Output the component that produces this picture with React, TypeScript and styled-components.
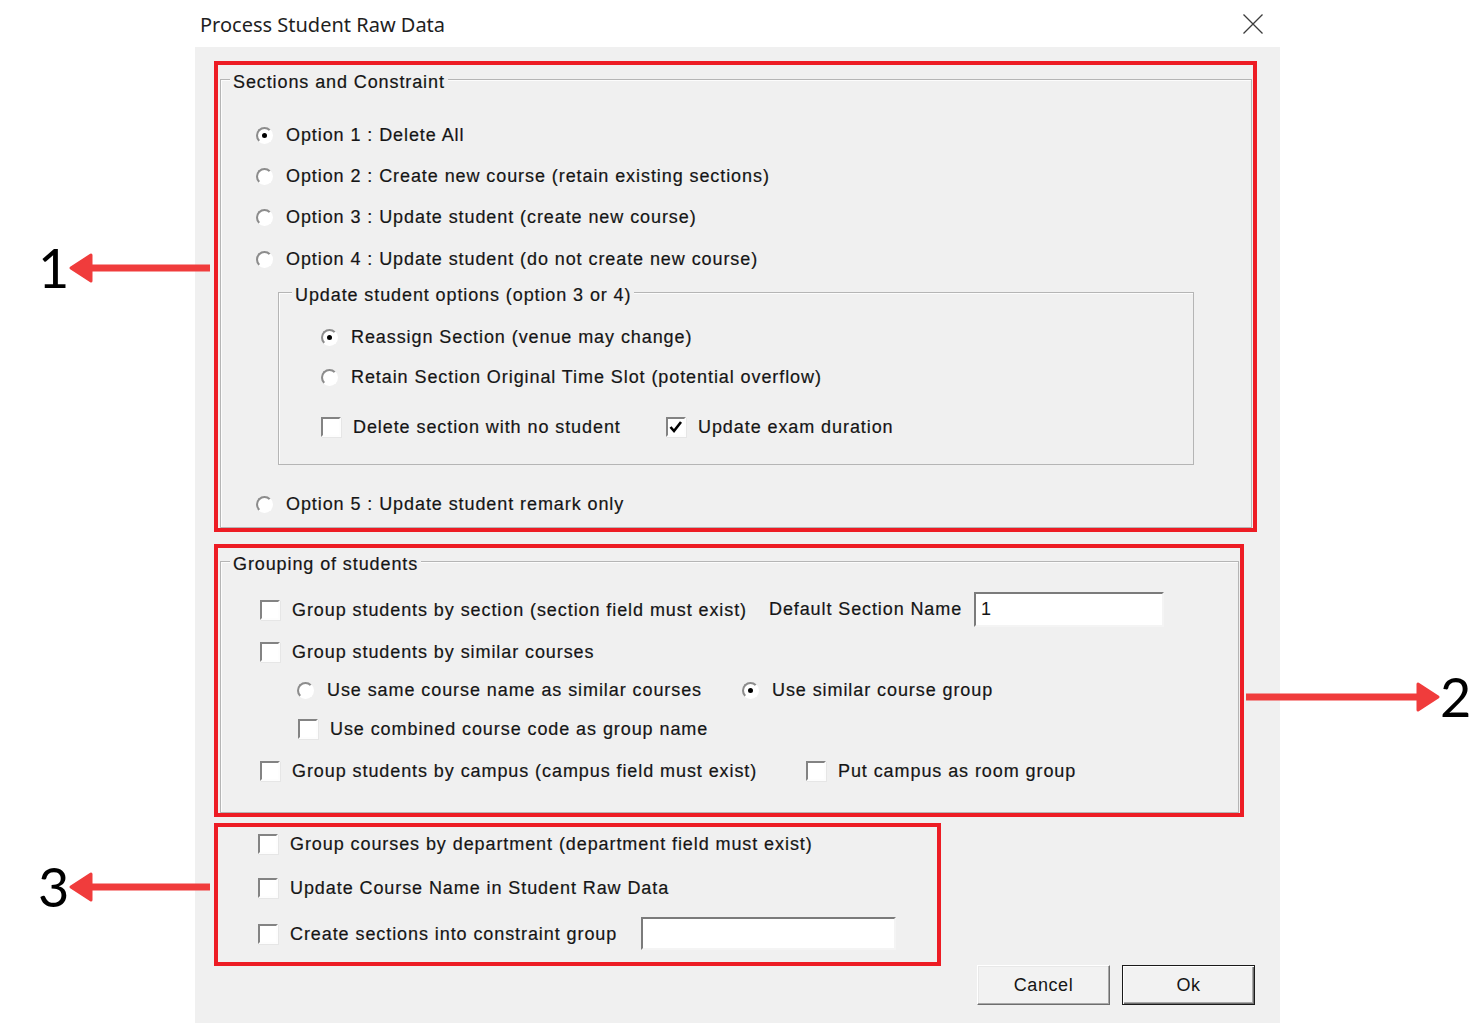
import styled, { createGlobalStyle } from 'styled-components'

const GlobalStyle = createGlobalStyle`
  html, body {
    margin: 0;
    padding: 0;
    background: #ffffff;
  }
  body {
    font-family: 'Liberation Sans', Arial, sans-serif;
    color: #151515;
  }
`

function Radio({ label, checked, width }: { label: string; checked?: boolean; width?: number }) {
  return (
    <Choice $gap={13} $width={width}>
      <RadioDot $checked={checked} />
      <LabelText>{label}</LabelText>
    </Choice>
  )
}

function Check({ label, checked, width }: { label: string; checked?: boolean; width?: number }) {
  return (
    <Choice $gap={12} $width={width}>
      <CheckBox>
        {checked && (
          <svg width="16" height="16" viewBox="0 0 16 16">
            <polyline points="2.5,8 6,12 13,3" fill="none" stroke="#000" strokeWidth="2.6" />
          </svg>
        )}
      </CheckBox>
      <LabelText>{label}</LabelText>
    </Choice>
  )
}

function Arrow({ length, dir }: { length: number; dir: 'left' | 'right' }) {
  const head = 22
  const tri =
    dir === 'left'
      ? `2,15 ${head},2 ${head},28`
      : `${length - 2},15 ${length - head},2 ${length - head},28`
  return (
    <svg width={length} height={30} viewBox={`0 0 ${length} 30`}>
      <g stroke="#f03c3c" fill="#f03c3c" strokeLinejoin="round">
        {dir === 'left' ? (
          <line x1={head - 4} y1={15} x2={length} y2={15} strokeWidth={7} />
        ) : (
          <line x1={0} y1={15} x2={length - head + 4} y2={15} strokeWidth={7} />
        )}
        <polygon points={tri} strokeWidth={3} />
      </g>
    </svg>
  )
}

export default function App() {
  return (
    <>
      <GlobalStyle />
      <Page>
        <Dialog>
          <TitleBar>
            <Title>Process Student Raw Data</Title>
            <CloseButton aria-label="Close">
              <svg width="20" height="20" viewBox="0 0 20 20">
                <path d="M0.5 0.5 19.5 19.5 M19.5 0.5 0.5 19.5" stroke="#3c3c3c" strokeWidth="1.3" />
              </svg>
            </CloseButton>
          </TitleBar>

          <Body>
            <Highlight $width={1043}>
              <GroupBox $mt={14}>
                <Caption $inset={9}>Sections and Constraint</Caption>
                <GroupBody $pl={35} $pb={11}>
                  <Row $mt={31}>
                    <Radio checked label="Option 1 : Delete All" />
                  </Row>
                  <Row $mt={17}>
                    <Radio label="Option 2 : Create new course (retain existing sections)" />
                  </Row>
                  <Row $mt={17}>
                    <Radio label="Option 3 : Update student (create new course)" />
                  </Row>
                  <Row $mt={18}>
                    <Radio label="Option 4 : Update student (do not create new course)" />
                  </Row>

                  <InnerGroup $mt={21}>
                    <Caption $inset={13}>Update student options (option 3 or 4)</Caption>
                    <GroupBody $pl={42} $pb={25}>
                      <Row $mt={20}>
                        <Radio checked label="Reassign Section (venue may change)" />
                      </Row>
                      <Row $mt={16}>
                        <Radio label="Retain Section Original Time Slot (potential overflow)" />
                      </Row>
                      <Row $mt={26}>
                        <Check width={345} label="Delete section with no student" />
                        <Check checked label="Update exam duration" />
                      </Row>
                    </GroupBody>
                  </InnerGroup>

                  <Row $mt={27}>
                    <Radio label="Option 5 : Update student remark only" />
                  </Row>
                </GroupBody>
              </GroupBox>

              <Callout $left={-180} $top={176}>
                <Numeral>1</Numeral>
                <Arrow length={141} dir="left" />
              </Callout>
            </Highlight>

            <Highlight $width={1030} $mt={12}>
              <GroupBox $mt={13}>
                <Caption $inset={9}>Grouping of students</Caption>
                <GroupBody $pl={39} $pb={29}>
                  <Row $mt={18} $height={35}>
                    <Check width={509} label="Group students by section (section field must exist)" />
                    <FieldLabel>Default Section Name</FieldLabel>
                    <TextField readOnly value="1" $width={190} $height={35} />
                  </Row>
                  <Row $mt={13}>
                    <Check label="Group students by similar courses" />
                  </Row>
                  <Row $mt={14} $indent={37}>
                    <Radio width={445} label="Use same course name as similar courses" />
                    <Radio checked label="Use similar course group" />
                  </Row>
                  <Row $mt={15} $indent={38}>
                    <Check label="Use combined course code as group name" />
                  </Row>
                  <Row $mt={18}>
                    <Check width={546} label="Group students by campus (campus field must exist)" />
                    <Check label="Put campus as room group" />
                  </Row>
                </GroupBody>
              </GroupBox>

              <Callout $left={1028} $top={122}>
                <Arrow length={194} dir="right" />
                <Numeral>2</Numeral>
              </Callout>
            </Highlight>

            <Highlight $width={727} $mt={6}>
              <GroupBody $pl={40} $pb={12} $pt={5}>
                <Row>
                  <Check label="Group courses by department (department field must exist)" />
                </Row>
                <Row $mt={20}>
                  <Check label="Update Course Name in Student Raw Data" />
                </Row>
                <Row $mt={17} $height={33}>
                  <Check width={383} label="Create sections into constraint group" />
                  <TextField readOnly value="" $width={255} $height={33} />
                </Row>
              </GroupBody>

              <Callout $left={-180} $top={33}>
                <Numeral>3</Numeral>
                <Arrow length={141} dir="left" />
              </Callout>
            </Highlight>

            <ButtonRow>
              <Button type="button">Cancel</Button>
              <Button type="button" $default>
                Ok
              </Button>
            </ButtonRow>
          </Body>
        </Dialog>
      </Page>
    </>
  )
}

const Page = styled.div`
  padding-left: 195px;
`

const Dialog = styled.div`
  width: 1085px;
  display: flex;
  flex-direction: column;
`

const TitleBar = styled.header`
  height: 47px;
  display: flex;
  align-items: center;
  justify-content: space-between;
  background: #ffffff;
`

const Title = styled.h1`
  margin: 2px 0 0 5px;
  font-family: 'Noto Sans', sans-serif;
  font-size: 20px;
  font-weight: 400;
  color: #1f1f1f;
`

const CloseButton = styled.button`
  width: 55px;
  height: 47px;
  display: flex;
  align-items: center;
  justify-content: center;
  padding: 0;
  border: none;
  background: transparent;
`

const Body = styled.div`
  height: 976px;
  box-sizing: border-box;
  padding: 14px 25px 0 19px;
  background: #f0f0f0;
  display: flex;
  flex-direction: column;
`

const Highlight = styled.section<{ $width: number; $mt?: number }>`
  position: relative;
  box-sizing: border-box;
  width: ${(p) => p.$width}px;
  margin-top: ${(p) => p.$mt ?? 0}px;
  border: 4px solid #ed1c24;
`

const GroupBox = styled.div<{ $mt: number }>`
  margin: ${(p) => p.$mt}px 1px 0 2px;
  border: 1px solid #b5b5b5;
  box-shadow: inset 1px 1px 0 #fcfcfc;
`

const InnerGroup = styled(GroupBox)`
  box-sizing: border-box;
  width: 916px;
  margin-left: 22px;
  margin-right: 0;
`

const GroupBody = styled.div<{ $pl: number; $pb: number; $pt?: number }>`
  display: flex;
  flex-direction: column;
  align-items: flex-start;
  padding: ${(p) => p.$pt ?? 0}px 0 ${(p) => p.$pb}px ${(p) => p.$pl}px;
`

const Caption = styled.div<{ $inset: number }>`
  width: fit-content;
  margin: -8px 0 0 ${(p) => p.$inset}px;
  padding: 0 3px;
  background: #f0f0f0;
  font-size: 18px;
  letter-spacing: 0.9px;
  line-height: 20px;
  white-space: nowrap;
  -webkit-text-stroke: 0.2px currentColor;
`

const Row = styled.div<{ $mt?: number; $indent?: number; $height?: number }>`
  display: flex;
  align-items: center;
  height: ${(p) => p.$height ?? 24}px;
  margin-top: ${(p) => p.$mt ?? 0}px;
  margin-left: ${(p) => p.$indent ?? 0}px;
`

const Choice = styled.label<{ $width?: number; $gap: number }>`
  display: flex;
  align-items: center;
  flex: none;
  gap: ${(p) => p.$gap}px;
  width: ${(p) => (p.$width ? `${p.$width}px` : 'auto')};
`

const LabelText = styled.span`
  font-size: 18px;
  letter-spacing: 0.92px;
  line-height: 20px;
  white-space: nowrap;
  -webkit-text-stroke: 0.2px currentColor;
`

const RadioDot = styled.span<{ $checked?: boolean }>`
  flex: none;
  width: 17px;
  height: 17px;
  box-sizing: border-box;
  display: flex;
  align-items: center;
  justify-content: center;
  border-radius: 50%;
  border: 2px solid;
  border-color: #8c8c8c #ffffff #ffffff #8c8c8c;
  background: #ffffff;

  &::after {
    content: '';
    width: 5px;
    height: 5px;
    border-radius: 50%;
    background: ${(p) => (p.$checked ? '#000000' : 'transparent')};
  }
`

const CheckBox = styled.span`
  flex: none;
  width: 20px;
  height: 20px;
  box-sizing: border-box;
  display: flex;
  align-items: center;
  justify-content: center;
  border: 2px solid;
  border-color: #838383 #fdfdfd #fdfdfd #838383;
  box-shadow: 1px 1px 0 #e6e6e6;
  background: #ffffff;
`

const FieldLabel = styled.span`
  width: 205px;
  font-size: 18px;
  letter-spacing: 0.9px;
  white-space: nowrap;
  -webkit-text-stroke: 0.2px currentColor;
`

const TextField = styled.input<{ $width: number; $height: number }>`
  box-sizing: border-box;
  width: ${(p) => p.$width}px;
  height: ${(p) => p.$height}px;
  padding: 0 0 0 5px;
  border: 2px solid;
  border-color: #7b7b7b #f4f4f4 #f4f4f4 #7b7b7b;
  background: #ffffff;
  font-family: 'Liberation Sans', Arial, sans-serif;
  font-size: 18px;
  color: #151515;
  outline: none;
`

const ButtonRow = styled.div`
  display: flex;
  justify-content: flex-end;
  gap: 12px;
  margin-top: -1px;
`

const Button = styled.button<{ $default?: boolean }>`
  width: 133px;
  height: 40px;
  box-sizing: border-box;
  padding: 0;
  font-family: 'Liberation Sans', Arial, sans-serif;
  font-size: 18px;
  letter-spacing: 0.6px;
  color: #151515;
  background: #f2f2f2;
  border: 1px solid;
  border-color: ${(p) => (p.$default ? '#1a1a1a' : '#ffffff #6e6e6e #6e6e6e #ffffff')};
  box-shadow: ${(p) =>
    p.$default
      ? 'inset 1px 1px 0 #ffffff, inset -1px -1px 0 #6e6e6e, inset -2px -2px 0 #a8a8a8'
      : 'inset -1px -1px 0 #a8a8a8, inset 1px 1px 0 #e8e8e8'};
`

const Callout = styled.div<{ $left: number; $top: number }>`
  position: absolute;
  left: ${(p) => p.$left}px;
  top: ${(p) => p.$top}px;
  display: flex;
  align-items: center;
  pointer-events: none;
`

const Numeral = styled.span`
  font-family: Lato, 'DejaVu Sans', sans-serif;
  font-size: 54px;
  line-height: 54px;
  color: #000000;
`
